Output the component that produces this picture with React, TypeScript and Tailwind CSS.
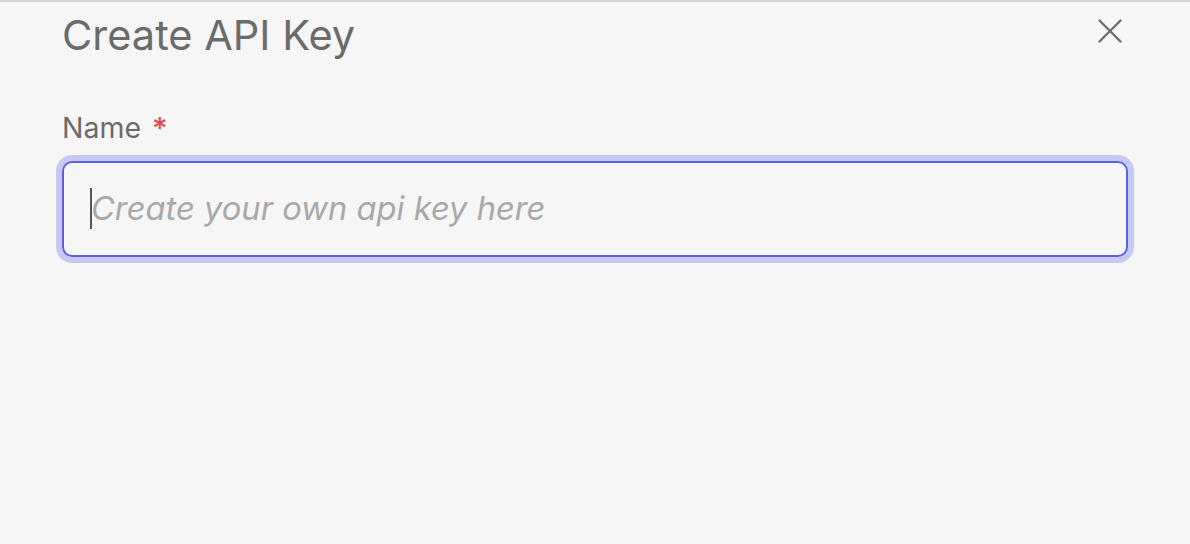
export default function App() {
  return (
    <div className="min-h-screen w-full bg-[#f6f6f6] border-t-2 border-[#d4d4d4] [font-family:Inter,'Noto_Sans',sans-serif]">
      <div className="px-[62px] pt-[8px]">
        {/* Header */}
        <div className="flex items-center justify-between">
          <h1 className="text-[41.5px] leading-[50px] font-normal text-[#6b6b6b]">Create API Key</h1>
          <button className="mr-[6px] mb-[8px] text-[#6b6b6b]">
            <svg width="24" height="24" viewBox="0 0 24 24" fill="none" stroke="currentColor" strokeWidth="2.3" strokeLinecap="round">
              <path d="M1.5 1.5 22.5 22.5M22.5 1.5 1.5 22.5" />
            </svg>
          </button>
        </div>

        {/* Name field */}
        <div className="mt-[51px]">
          <label className="flex items-center gap-[11px] text-[28.5px] leading-[34px] text-[#6b6b6b]">
            Name <span className="text-[#e5484d] text-[30px] font-medium">*</span>
          </label>
          <div className="relative mt-[16px] rounded-[10px] border-2 border-[#5b5fe6] ring-[6px] ring-[#c8c9f3] h-[96px] flex items-center pl-[27px]">
            <span className="absolute left-[26px] top-[25px] h-[41px] w-[2px] bg-[#555]" />
            <input
              placeholder="Create your own api key here"
              className="w-full bg-transparent outline-none text-[32.7px] text-[#333] placeholder:italic placeholder:text-[#a9a9a9]"
            />
          </div>
        </div>
      </div>
    </div>
  );
}
